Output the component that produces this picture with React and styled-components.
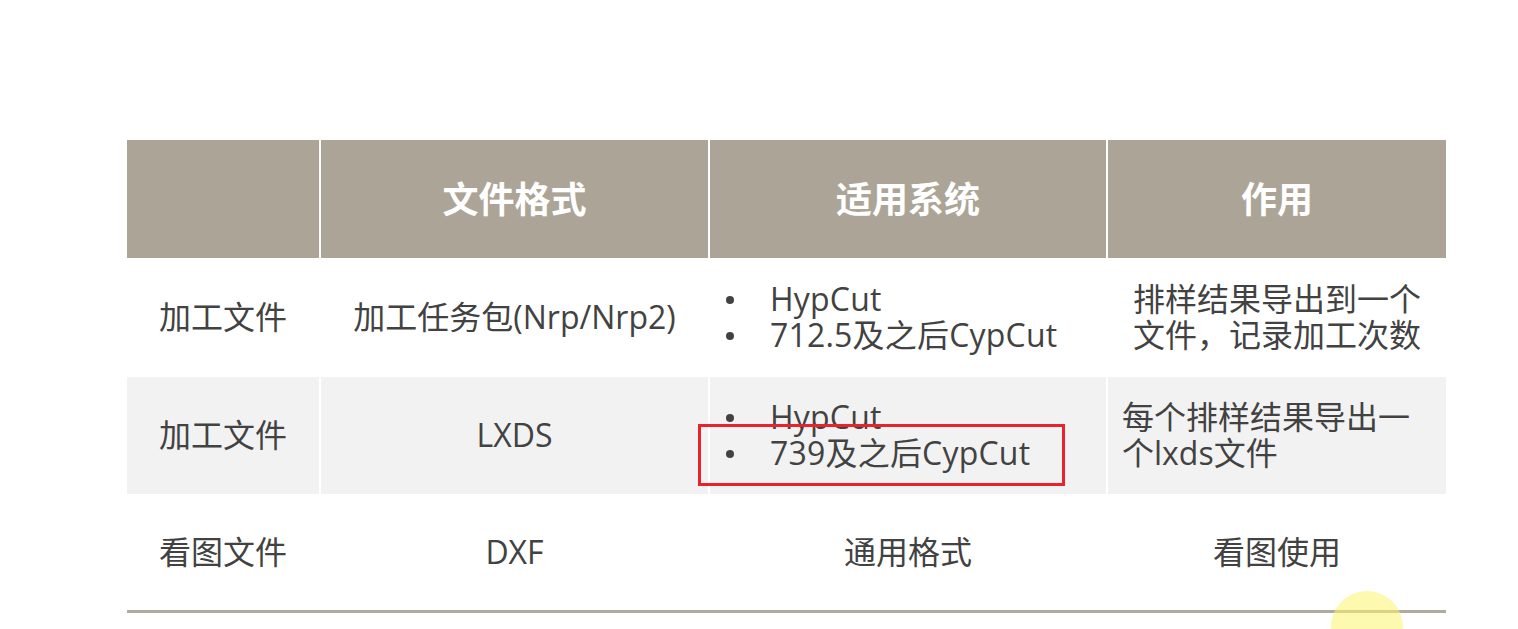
import React from "react";
import styled, { createGlobalStyle } from "styled-components";

const GlobalStyle = createGlobalStyle`
  html, body {
    margin: 0;
    padding: 0;
    background: #ffffff;
    overflow: hidden;
  }
  body {
    font-family: "Open Sans", "Noto Sans CJK SC", sans-serif;
    color: #424242;
  }
`;

const Page = styled.div`
  position: relative;
  width: 1518px;
  height: 629px;
  overflow: hidden;
  padding: 140px 0 0 127px;
  box-sizing: border-box;
`;

const TableWrap = styled.div`
  position: relative;
  width: 1319px;
`;

const Grid = styled.div`
  display: grid;
  grid-template-columns: 192px 387px 396px 338px;
  grid-template-rows: 118px 115px 117px 114px;
  gap: 2px;
  border-bottom: 3px solid #b1ab9e;
`;

const HeadCell = styled.div`
  background: #aca597;
  color: #ffffff;
  font-family: "Noto Sans CJK SC", sans-serif;
  font-weight: 700;
  font-size: 36px;
  display: flex;
  align-items: center;
  justify-content: center;
  padding-bottom: 4px;
  box-sizing: border-box;
`;

const Cell = styled.div`
  background: ${(p) => (p.$shade ? "#f2f2f2" : "#ffffff")};
  font-size: 32px;
  line-height: 36px;
  display: flex;
  align-items: center;
  justify-content: ${(p) => (p.$left ? "flex-start" : "center")};
  text-align: ${(p) => (p.$left ? "left" : "center")};
  padding: ${(p) => (p.$left ? "0 0 2px 14px" : "0 0 2px 0")};
  box-sizing: border-box;
`;

const BulletList = styled.ul`
  list-style: none;
  margin: 0;
  padding: 0;
  align-self: center;
  width: 100%;
  letter-spacing: 0.2px;
`;

const BulletItem = styled.li`
  display: flex;
  align-items: center;
  &::before {
    content: "";
    width: 8px;
    height: 8px;
    border-radius: 50%;
    background: #424242;
    margin: 2px 36px 0 16px;
    flex-shrink: 0;
  }
`;

const Highlight = styled.div`
  position: absolute;
  left: 571px;
  top: 284px;
  width: 367px;
  height: 62px;
  border: 3px solid #e8232b;
  box-sizing: border-box;
  pointer-events: none;
`;

const Pointer = styled.div`
  position: absolute;
  left: 1331px;
  top: 591px;
  width: 72px;
  height: 72px;
  border-radius: 50%;
  background: rgba(252, 244, 110, 0.55);
  pointer-events: none;
`;

const Bullets = ({ items }) => (
  <BulletList>
    {items.map((t) => (
      <BulletItem key={t}>{t}</BulletItem>
    ))}
  </BulletList>
);

const App = () => {
  return (
    <>
      <GlobalStyle />
      <Page>
        <TableWrap>
          <Grid>
            <HeadCell />
            <HeadCell>文件格式</HeadCell>
            <HeadCell>适用系统</HeadCell>
            <HeadCell>作用</HeadCell>

            <Cell>加工文件</Cell>
            <Cell>加工任务包(Nrp/Nrp2)</Cell>
            <Cell>
              <Bullets items={["HypCut", "712.5及之后CypCut"]} />
            </Cell>
            <Cell>
              排样结果导出到一个
              <br />
              文件，记录加工次数
            </Cell>

            <Cell $shade>加工文件</Cell>
            <Cell $shade>LXDS</Cell>
            <Cell $shade>
              <Bullets items={["HypCut", "739及之后CypCut"]} />
            </Cell>
            <Cell $shade $left>
              每个排样结果导出一
              <br />
              个lxds文件
            </Cell>

            <Cell>看图文件</Cell>
            <Cell>DXF</Cell>
            <Cell>通用格式</Cell>
            <Cell>看图使用</Cell>
          </Grid>
          <Highlight />
        </TableWrap>
        <Pointer />
      </Page>
    </>
  );
};

export default App;
